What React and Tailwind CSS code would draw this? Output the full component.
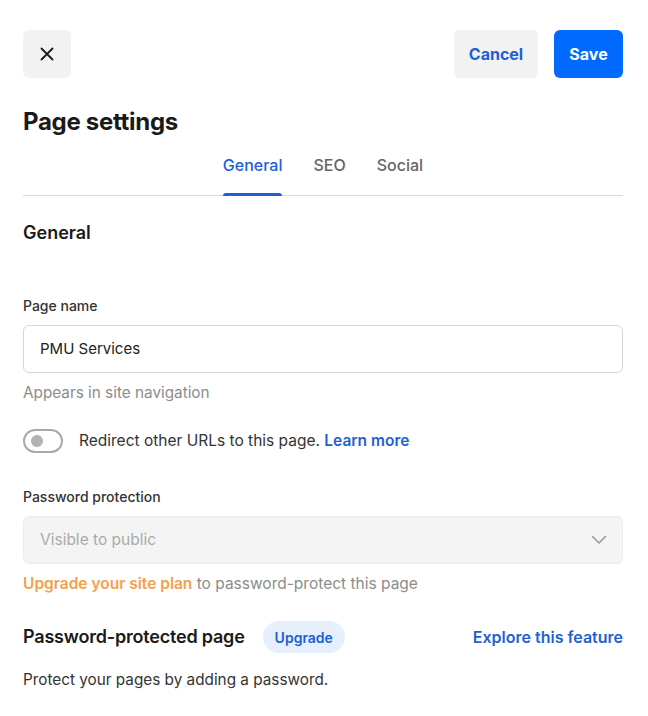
import React from "react";

export default function App() {
    return (
        <div
            className="min-h-screen bg-white pl-[23px] pr-[25px] pt-[30px] text-[#222]"
            style={{ fontFamily: "Inter, 'Noto Sans', sans-serif" }}
        >
            {/* Top bar */}
            <div className="flex items-center justify-between">
                <button className="w-12 h-12 rounded-md bg-[#f2f2f2] flex items-center justify-center">
                    <svg width="14" height="14" viewBox="0 0 14 14" fill="none">
                        <path d="M1.5 1.5l11 11M12.5 1.5l-11 11" stroke="#1a1a1a" strokeWidth="1.8" strokeLinecap="round" />
                    </svg>
                </button>
                <div className="flex items-center gap-4">
                    <button className="h-12 w-[84px] rounded-md bg-[#f2f2f2] text-[16px] font-bold text-[#1e5fd6]">
                        Cancel
                    </button>
                    <button className="h-12 w-[69px] rounded-md bg-[#006aff] text-[16px] font-bold text-white">
                        Save
                    </button>
                </div>
            </div>

            <h1 className="mt-7 text-[24px] leading-8 font-bold text-[#1a1a1a] tracking-[-0.3px]">
                Page settings
            </h1>

            {/* Tabs */}
            <div className="flex justify-center gap-[31px] border-b border-[#d9d9d9]">
                <div className="relative pt-[15px] pb-[18px] text-[16px] leading-6 font-medium text-[#1e5fd6]">
                    General
                    <span className="absolute left-0 right-0 -bottom-px h-[3px] bg-[#1e5fd6] rounded-t-sm" />
                </div>
                <div className="pt-[15px] pb-[18px] text-[16px] leading-6 font-medium text-[#666]">SEO</div>
                <div className="pt-[15px] pb-[18px] text-[16px] leading-6 font-medium text-[#666]">Social</div>
            </div>

            <h2 className="mt-[23px] text-[18px] leading-7 font-semibold text-[#1a1a1a]">General</h2>

            {/* Page name */}
            <label className="block mt-[49px] text-[14px] leading-5 font-medium text-[#333]">Page name</label>
            <div className="mt-[9px] h-12 rounded-md border border-[#d6d6d6] px-4 flex items-center text-[15px] text-[#222]">
                PMU Services
            </div>
            <p className="mt-[8px] text-[15.3px] leading-6 text-[#8c8c8c]">Appears in site navigation</p>

            {/* Redirect toggle */}
            <div className="mt-6 flex items-center gap-4">
                <div className="w-10 h-6 rounded-full border-2 border-[#a9a9a9] flex items-center pl-[6px]">
                    <span className="w-3 h-3 rounded-full bg-[#b3b3b3]" />
                </div>
                <p className="text-[15.5px] leading-6 text-[#333]">
                    Redirect other URLs to this page.{" "}
                    <span className="font-semibold text-[#1e5fd6]">Learn more</span>
                </p>
            </div>

            {/* Password protection */}
            <label className="block mt-[34px] text-[14px] leading-5 font-medium text-[#333]">
                Password protection
            </label>
            <div className="mt-[9px] h-12 rounded-md border border-[#ededed] bg-[#f4f4f4] px-4 flex items-center justify-between text-[15.5px] text-[#ababab]">
                <span>Visible to public</span>
                <svg width="16" height="10" viewBox="0 0 16 10" fill="none" className="-mr-px">
                    <path d="M1.5 1.5L8 8l6.5-6.5" stroke="#9a9a9a" strokeWidth="1.6" strokeLinecap="round" strokeLinejoin="round" />
                </svg>
            </div>
            <p className="mt-[8px] text-[15.5px] leading-6 text-[#8c8c8c]">
                <span className="font-semibold text-[#f5a04c]">Upgrade your site plan</span> to password-protect this page
            </p>

            {/* Password-protected page */}
            <div className="mt-[25px] flex items-center justify-between">
                <div className="flex items-center gap-[18px]">
                    <h3 className="text-[18px] leading-7 font-semibold text-[#1a1a1a] tracking-[-0.2px]">
                        Password-protected page
                    </h3>
                    <span className="h-8 px-[12px] rounded-full bg-[#e6f0fd] flex items-center text-[14px] font-semibold text-[#1e5fd6]">
                        Upgrade
                    </span>
                </div>
                <a className="text-[16px] font-semibold text-[#1e5fd6]">Explore this feature</a>
            </div>
            <p className="mt-[15px] text-[15.3px] leading-6 text-[#333]">Protect your pages by adding a password.</p>
        </div>
    );
}
